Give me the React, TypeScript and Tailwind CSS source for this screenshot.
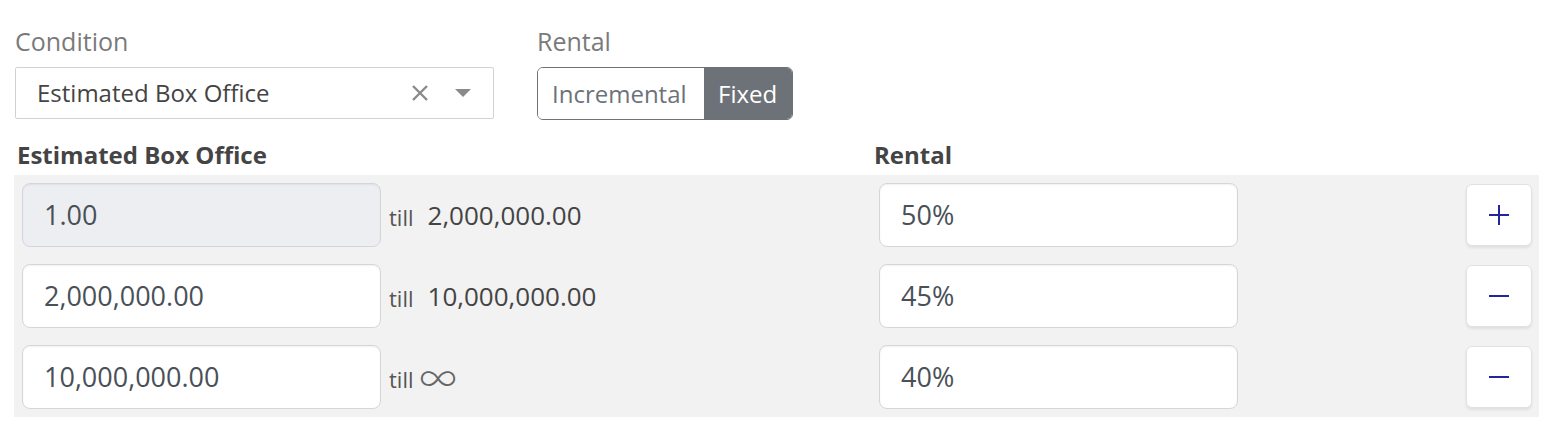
import React from "react";

const font = { fontFamily: '"Open Sans", "Noto Sans", sans-serif' };

function Plus() {
  return (
    <svg width="22" height="22" viewBox="0 0 22 22">
      <path d="M11 1v20M1 11h20" stroke="#24249e" strokeWidth="2" />
    </svg>
  );
}
function Minus() {
  return (
    <svg width="22" height="22" viewBox="0 0 22 22">
      <path d="M1 11h20" stroke="#24249e" strokeWidth="2" />
    </svg>
  );
}

const rows = [
  { from: "1.00", till: "2,000,000.00", rental: "50%", disabled: true, plus: true },
  { from: "2,000,000.00", till: "10,000,000.00", rental: "45%", disabled: false, plus: false },
  { from: "10,000,000.00", till: "∞", rental: "40%", disabled: false, plus: false },
];

export default function App() {
  return (
    <div className="w-[1554px] h-[440px] bg-white pt-[26px] pl-[14px]" style={font}>
      <div className="flex gap-[43px] pl-[1px]">
        <div className="w-[479px]">
          <div className="text-[25px] leading-[30px] mb-[11px] text-[#7a7a7a]">Condition</div>
          <div className="h-[52px] border border-[#cfd3d7] rounded-[2px] flex items-center pl-[21px] pr-[22px] text-[24px] text-[#444]">
            <span className="flex-1">Estimated Box Office</span>
            <svg width="18" height="18" viewBox="0 0 18 18" className="mr-[26px]">
              <path d="M2 2l14 14M16 2L2 16" stroke="#8a8a8a" strokeWidth="2.4" />
            </svg>
            <svg width="16" height="10" viewBox="0 0 16 10">
              <path d="M0 1h16L8 9z" fill="#8a8a8a" />
            </svg>
          </div>
        </div>
        <div>
          <div className="text-[25px] leading-[30px] mb-[11px] text-[#7a7a7a]">Rental</div>
          <div className="h-[53px] flex border-[1.5px] border-[#6d7279] rounded-[6px] overflow-hidden text-[24px]">
            <div className="w-[166px] flex items-center pl-[14px] text-[#6d7279] bg-white">Incremental</div>
            <div className="w-[88px] flex items-center pl-[14px] text-white bg-[#6d7279]">Fixed</div>
          </div>
        </div>
      </div>

      <div className="mt-[19px] mb-[4px] h-[32px] flex items-center text-[24px] font-bold text-[#444]">
        <div className="w-[860px] pl-[3px]">Estimated Box Office</div>
        <div>Rental</div>
      </div>

      <div className="w-[1525px] bg-[#f2f2f2] pt-[8px] pb-[8px] pl-[8px] pr-[7px] flex flex-col gap-[17px]">
        {rows.map((r, i) => (
          <div key={i} className="h-[64px] flex items-center">
            <div className="w-[857px] flex items-center">
              <div
                className={
                  "w-[359px] h-[64px] rounded-[8px] border-[1.5px] border-[#d3d7dc] flex items-center pl-[21px] text-[27px] text-[#495057] shadow-[inset_0_1px_2px_rgba(0,0,0,0.06)] " +
                  (r.disabled ? "bg-[#eceef1]" : "bg-white")
                }
              >
                {r.from}
              </div>
              <span className="ml-[8px] text-[22px] text-[#555] pt-[4px]">till</span>
              {r.till === "∞" ? (
                <span
                  className="ml-[6px] text-[37px] leading-none text-[#666] inline-block"
                  style={{ fontFamily: '"Noto Sans CJK JP", sans-serif', fontWeight: 300 }}
                >
                  ∞
                </span>
              ) : (
                <span className="ml-[14px] text-[26px] text-[#444]">{r.till}</span>
              )}
            </div>
            <div className="w-[359px] h-[64px] rounded-[8px] border-[1.5px] border-[#d3d7dc] bg-white flex items-center pl-[21px] text-[27px] text-[#495057] shadow-[inset_0_1px_2px_rgba(0,0,0,0.06)]">
              {r.rental}
            </div>
            <div className="ml-auto w-[66px] h-[62px] bg-white border border-[#e2e2e2] rounded-[6px] shadow-[0_2px_3px_rgba(0,0,0,0.08)] flex items-center justify-center">
              {r.plus ? <Plus /> : <Minus />}
            </div>
          </div>
        ))}
      </div>
    </div>
  );
}
